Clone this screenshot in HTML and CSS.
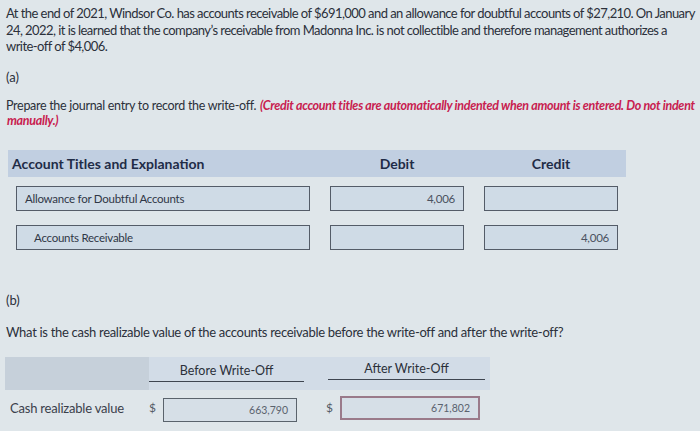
FILE: index.html
```html
<!DOCTYPE html>
<html>
<head>
<meta charset="utf-8">
<link rel="stylesheet" href="styles.css">
</head>
<body>
<div class="page">
  <p class="intro">At the end of 2021, Windsor Co. has accounts receivable of $691,000 and an allowance for doubtful accounts of $27,210. On January 24, 2022, it is learned that the company’s receivable from Madonna Inc. is not collectible and therefore management authorizes a <span class="nowrap">write-off</span> of $4,006.</p>
  <p class="part">(a)</p>
  <p class="instr">Prepare the journal entry to record the write-off. <em class="note">(Credit account titles are automatically indented when amount is entered. Do not indent</em> <em class="note">manually.)</em></p>
  <div class="journal">
    <div class="jhead">
      <div class="jh-title">Account Titles and Explanation</div>
      <div class="jh-col">Debit</div>
      <div class="jh-col">Credit</div>
    </div>
    <div class="jrow">
      <div class="box acct">Allowance for Doubtful Accounts</div>
      <div class="box amt">4,006</div>
      <div class="box amt"></div>
    </div>
    <div class="jrow">
      <div class="box acct indent">Accounts Receivable</div>
      <div class="box amt"></div>
      <div class="box amt">4,006</div>
    </div>
  </div>
  <p class="part partb">(b)</p>
  <p class="question">What is the cash realizable value of the accounts receivable before the write-off and after the write-off?</p>
  <div class="crv">
    <div class="crv-head">
      <div class="crv-blank"></div>
      <div class="crv-h before">Before Write-Off</div>
      <div class="crv-h after">After Write-Off</div>
    </div>
    <div class="crv-row">
      <div class="crv-label">Cash realizable value</div>
      <div class="cur">$</div>
      <div class="vbox v1">663,790</div>
      <div class="cur cur2">$</div>
      <div class="vbox v2">671,802</div>
    </div>
  </div>
</div>
</body>
</html>
```
FILE: styles.css
```css
html, body {
  margin: 0;
  padding: 0;
}
body {
  background: #dfe6ea;
  font-family: Lato, "Open Sans", sans-serif;
  color: #2b303a;
  width: 700px;
  height: 431px;
  overflow: hidden;
}
.page {
  padding: 5px 0 0 6px;
}
p { margin: 0; }
.nowrap { white-space: nowrap; }
.intro {
  font-size: 13px;
  line-height: 16.5px;
  letter-spacing: -0.56px;
  width: 694px;
}
.part {
  font-size: 13px;
  margin-top: 14px;
  line-height: 16px;
}
.instr {
  font-size: 12.5px;
  line-height: 15px;
  margin-top: 13px;
  letter-spacing: -0.3px;
  width: 694px;
}
.note {
  color: #c8204f;
  font-weight: bold;
  font-style: italic;
  margin-left: 1px;
}
.journal {
  margin-top: 22px;
  margin-left: 2px;
  width: 618px;
}
.jhead {
  display: flex;
  height: 27px;
  align-items: center;
  background: #c1cfe1;
  font-weight: bold;
  font-size: 14px;
  color: #1f2c47;
}
.jh-title {
  width: 318px;
  padding-left: 4px;
}
.jh-col {
  width: 134px;
  text-align: center;
  margin-right: 20px;
}
.jh-col:last-child { margin-right: 0; }
.jrow {
  display: flex;
  gap: 20px;
  margin-top: 9px;
  padding-left: 8px;
}
.jrow + .jrow { margin-top: 14px; }
.box {
  box-sizing: border-box;
  height: 25px;
  border: 1.5px solid #545c68;
  background: #cfdbe6;
  font-size: 11.5px;
  display: flex;
  align-items: center;
  color: #2f3746;
  letter-spacing: -0.25px;
}
.acct {
  width: 294px;
  padding-left: 8px;
}
.indent { padding-left: 17px; }
.amt {
  width: 134px;
  justify-content: flex-end;
  padding-right: 8px;
  color: #4a5260;
}
.partb { margin-top: 42px; }
.question {
  font-size: 13px;
  letter-spacing: -0.3px;
  margin-top: 16px;
  line-height: 16px;
}
.crv {
  margin-top: 17px;
  margin-left: -1px;
}
.crv-head {
  display: flex;
  align-items: flex-end;
  width: 485px;
  height: 33px;
  background: #d2dce7;
}
.crv-blank {
  width: 144px;
  height: 33px;
  background: #c6d0da;
}
.crv-h {
  font-size: 12.5px;
  text-align: center;
  border-bottom: 1.5px solid #3e4550;
  padding-bottom: 3px;
  margin-bottom: 8px;
  color: #2b303a;
}
.before { width: 155px; }
.after { width: 157px; margin-left: 24px; margin-bottom: 10px; }
.crv-row {
  display: flex;
  align-items: center;
  margin-top: 5px;
  height: 26px;
}
.crv-label {
  font-size: 13px;
  width: 144px;
  padding-left: 5px;
  box-sizing: border-box;
  letter-spacing: -0.2px;
  color: #3a404a;
}
.cur {
  font-size: 12px;
  width: 14px;
  color: #555c66;
}
.cur2 { width: 14px; margin-left: 29px; }
.vbox {
  box-sizing: border-box;
  height: 24px;
  border: 1.5px solid #5a636c;
  background: #d6dfe7;
  display: flex;
  align-items: center;
  justify-content: flex-end;
  padding-right: 8px;
  font-size: 10.5px;
  color: #5a626e;
}
.v1 { width: 134px; margin-top: 4px; }
.v2 { width: 140px; border: 2px solid #9a7a8a; margin-top: 0; }
```
